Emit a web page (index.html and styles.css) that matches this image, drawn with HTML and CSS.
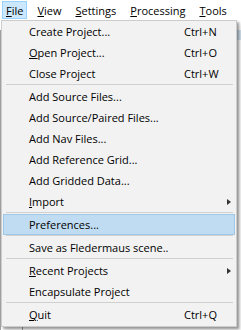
FILE: index.html
```html
<!DOCTYPE html>
<html lang="en">

<head>
    <meta charset="UTF-8">
    <meta name="viewport" content="width=device-width, initial-scale=1.0">
    <title>File Menu</title>
    <link rel="stylesheet" href="styles.css">
</head>

<body>
    <div class="window">
        <nav class="menubar">
            <span class="menubar-item active"><u>F</u>ile</span>
            <span class="menubar-item"><u>V</u>iew</span>
            <span class="menubar-item"><u>S</u>ettings</span>
            <span class="menubar-item"><u>P</u>rocessing</span>
            <span class="menubar-item"><u>T</u>ools</span>
        </nav>

        <div class="client">
            <div class="header-strip"></div>
            <div class="tree-pane"></div>
        </div>

        <!-- File dropdown, drawn over the window -->
        <div class="menu">
            <div class="menu-item"><span class="label">Create Project...</span><span class="key">Ctrl+N</span></div>
            <div class="menu-item"><span class="label"><u>O</u>pen Project...</span><span class="key">Ctrl+O</span></div>
            <div class="menu-item"><span class="label">Close Project</span><span class="key">Ctrl+W</span></div>
            <div class="separator"></div>
            <div class="menu-item"><span class="label">Add Source Files...</span><span class="key"></span></div>
            <div class="menu-item"><span class="label">Add Source/Paired Files...</span><span class="key"></span></div>
            <div class="menu-item"><span class="label">Add Nav Files...</span><span class="key"></span></div>
            <div class="menu-item"><span class="label">Add Reference Grid...</span><span class="key"></span></div>
            <div class="menu-item"><span class="label">Add Gridded Data...</span><span class="key"></span></div>
            <div class="menu-item"><span class="label"><u>I</u>mport</span><span class="key submenu"></span></div>
            <div class="separator"></div>
            <div class="menu-item hover"><span class="label">Preferences...</span><span class="key"></span></div>
            <div class="separator"></div>
            <div class="menu-item"><span class="label">Save as Fledermaus scene..</span><span class="key"></span></div>
            <div class="separator"></div>
            <div class="menu-item"><span class="label"><u>R</u>ecent Projects</span><span class="key submenu"></span></div>
            <div class="menu-item"><span class="label">Encapsulate Project</span><span class="key"></span></div>
            <div class="separator"></div>
            <div class="menu-item"><span class="label"><u>Q</u>uit</span><span class="key">Ctrl+Q</span></div>
        </div>
    </div>
</body>

</html>
```

FILE: styles.css
```css
/* General reset */

* {
    margin: 0;
    padding: 0;
    box-sizing: border-box;
}

body {
    font-family: "Open Sans", "Noto Sans", sans-serif;
    font-size: 11px;
    color: #000;
    background-color: #fff;
}

u {
    text-underline-offset: 1px;
}

.window {
    position: relative;
    width: 241px;
    height: 330px;
    overflow: hidden;
}

/* Menu bar */

.menubar {
    display: flex;
    gap: 6px;
    height: 20px;
    padding: 1px 0 1px 2px;
    background-color: #fff;
}

.menubar-item {
    display: flex;
    align-items: center;
    padding: 0 3px;
    border: 1px solid transparent;
}

.menubar-item.active {
    background-color: #cce8ff;
    border-color: #99d1ff;
}

/* Window content behind the menu */

.client {
    height: 310px;
    border-left: 1px solid #a0a0a0;
    background-color: #fff;
}

.header-strip {
    height: 10px;
    margin-top: 10px;
    background-color: #d5e5f2;
}

.tree-pane {
    height: 290px;
    width: 22px;
    border-right: 1px solid #a0a0a0;
}

/* Dropdown */

.menu {
    position: absolute;
    left: 1px;
    top: 20px;
    width: 236px;
    padding: 0 1px 1px;
    background-color: #f2f2f2;
    border: 1px solid #cccccc;
    box-shadow: 2px 2px 2px rgba(0, 0, 0, 0.32), 4px 4px 4px rgba(0, 0, 0, 0.12);
}

.menu-item {
    display: flex;
    align-items: center;
    height: 21px;
    padding-left: 25px;
    border: 1px solid transparent;
}

.menu-item.hover {
    background-color: #bfdcf2;
    border-color: #9fc8e6;
}

.menu-item .label {
    flex: 1;
}

.menu-item .key {
    width: 50px;
}

.menu-item .submenu {
    display: flex;
    justify-content: flex-end;
    padding-right: 3px;
}

.menu-item .submenu::after {
    content: "";
    border-left: 4px solid #333;
    border-top: 3.5px solid transparent;
    border-bottom: 3.5px solid transparent;
}

.separator {
    height: 2px;
    margin: 0 2px 0 3px;
    border-top: 1px solid #d0d0d0;
}
```
